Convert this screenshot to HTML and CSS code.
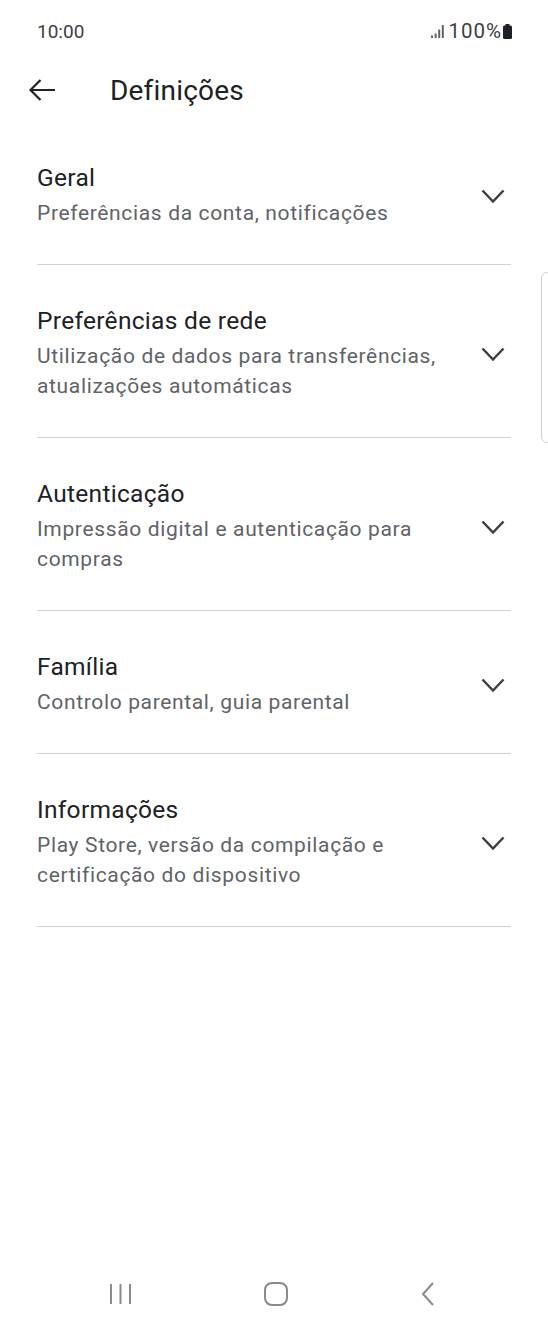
FILE: index.html
```html
<!DOCTYPE html>
<html lang="pt">
<head>
  <meta charset="UTF-8" />
  <meta name="viewport" content="width=device-width, initial-scale=1.0"/>
  <title>Definições</title>
  <link rel="stylesheet" href="styles.css">
</head>
<body>
  <div class="ecra">

    <div class="status">
      <span class="hora">10:00</span>
      <span class="estado">
        <svg class="sinal" width="14" height="13" viewBox="0 0 14 13">
          <rect x="0" y="10.5" width="2" height="2.5" fill="#5f6368"/>
          <rect x="3.6" y="8.5" width="2" height="4.5" fill="#5f6368"/>
          <rect x="7.2" y="4.5" width="2" height="8.5" fill="#5f6368"/>
          <rect x="10.8" y="0" width="2" height="13" fill="#5f6368"/>
        </svg>
        <span class="bat-texto">100%</span>
        <svg class="bateria" width="9" height="15" viewBox="0 0 9 15">
          <rect x="2.5" y="0" width="4" height="2" rx="0.5" fill="#202124"/>
          <rect x="0" y="1.5" width="9" height="13.5" rx="1.5" fill="#202124"/>
        </svg>
      </span>
    </div>

    <div class="topo">
      <svg class="voltar" width="28" height="24" viewBox="0 0 28 24">
        <path d="M2.5 12H27M12.5 2L2.5 12l10 10" fill="none" stroke="#202124" stroke-width="2.2"/>
      </svg>
      <h1>Definições</h1>
    </div>

    <div class="lista">
      <div class="item">
        <div class="textos">
          <div class="titulo">Geral</div>
          <div class="sub">Preferências da conta, notificações</div>
        </div>
        <svg class="seta" width="24" height="16" viewBox="0 0 24 16"><path d="M1.5 2.5l10.5 11 10.5-11" fill="none" stroke="#3c4043" stroke-width="2.5"/></svg>
      </div>
      <div class="item">
        <div class="textos">
          <div class="titulo">Preferências de rede</div>
          <div class="sub">Utilização de dados para transferências, atualizações automáticas</div>
        </div>
        <svg class="seta" width="24" height="16" viewBox="0 0 24 16"><path d="M1.5 2.5l10.5 11 10.5-11" fill="none" stroke="#3c4043" stroke-width="2.5"/></svg>
      </div>
      <div class="item">
        <div class="textos">
          <div class="titulo">Autenticação</div>
          <div class="sub">Impressão digital e autenticação para compras</div>
        </div>
        <svg class="seta" width="24" height="16" viewBox="0 0 24 16"><path d="M1.5 2.5l10.5 11 10.5-11" fill="none" stroke="#3c4043" stroke-width="2.5"/></svg>
      </div>
      <div class="item">
        <div class="textos">
          <div class="titulo">Família</div>
          <div class="sub">Controlo parental, guia parental</div>
        </div>
        <svg class="seta" width="24" height="16" viewBox="0 0 24 16"><path d="M1.5 2.5l10.5 11 10.5-11" fill="none" stroke="#3c4043" stroke-width="2.5"/></svg>
      </div>
      <div class="item">
        <div class="textos">
          <div class="titulo">Informações</div>
          <div class="sub">Play Store, versão da compilação e certificação do dispositivo</div>
        </div>
        <svg class="seta" width="24" height="16" viewBox="0 0 24 16"><path d="M1.5 2.5l10.5 11 10.5-11" fill="none" stroke="#3c4043" stroke-width="2.5"/></svg>
      </div>
    </div>

    <div class="barra-scroll"></div>

    <div class="navegacao">
      <svg width="24" height="24" viewBox="0 0 24 24">
        <path d="M3 2v20M12.5 2v20M22 2v20" stroke="#8a8a8a" stroke-width="2" fill="none"/>
      </svg>
      <svg width="26" height="26" viewBox="0 0 26 26">
        <rect x="2" y="2" width="22" height="22" rx="7" stroke="#8a8a8a" stroke-width="2" fill="none"/>
      </svg>
      <svg width="16" height="26" viewBox="0 0 16 26">
        <path d="M13 2L3 13l10 11" stroke="#8a8a8a" stroke-width="2" fill="none"/>
      </svg>
    </div>

  </div>
</body>
</html>
```

FILE: styles.css
```css
body {
  margin: 0;
  background: #fff;
  font-family: Roboto, "Noto Sans", Arial, sans-serif;
  color: #202124;
}
.ecra {
  position: relative;
  width: 548px;
  height: 1339px;
  overflow: hidden;
  display: flex;
  flex-direction: column;
}
.status {
  display: flex;
  justify-content: space-between;
  align-items: center;
  height: 22px;
  padding: 20px 36px 0 37px;
  font-size: 19px;
  color: #3c4043;
}
.estado {
  display: flex;
  align-items: center;
}
.sinal {
  margin-right: 3px;
}
.bat-texto {
  font-size: 20.5px;
  letter-spacing: 1px;
  margin-right: 1px;
}
.topo {
  display: flex;
  align-items: center;
  height: 48px;
  margin-top: 24px;
  padding-left: 28px;
}
.topo h1 {
  margin: 0 0 0 54px;
  font-size: 28px;
  font-weight: 400;
  letter-spacing: 0.2px;
  color: #202124;
}
.lista {
  padding: 0 37px;
  margin-top: 49px;
}
.item {
  display: flex;
  align-items: center;
  padding: 41px 0 36px;
  border-bottom: 1.5px solid #d2d2d2;
}
.item:first-child {
  padding-top: 0;
}
.textos {
  flex: 1;
  padding-right: 20px;
}
.titulo {
  font-size: 24.5px;
  line-height: 30px;
  letter-spacing: 0.3px;
  margin-bottom: 5px;
  color: #202124;
}
.sub {
  font-size: 21px;
  line-height: 30px;
  letter-spacing: 0.65px;
  color: #5f6368;
}
.seta {
  flex-shrink: 0;
  margin-right: 6px;
}
.barra-scroll {
  position: absolute;
  left: 541px;
  top: 272px;
  width: 12px;
  height: 171px;
  border: 1.5px solid #d0d0d0;
  border-radius: 6px;
  box-sizing: border-box;
}
.navegacao {
  margin-top: auto;
  display: flex;
  justify-content: space-between;
  align-items: center;
  padding: 0 112px 32px 108px;
  height: 26px;
}
```
